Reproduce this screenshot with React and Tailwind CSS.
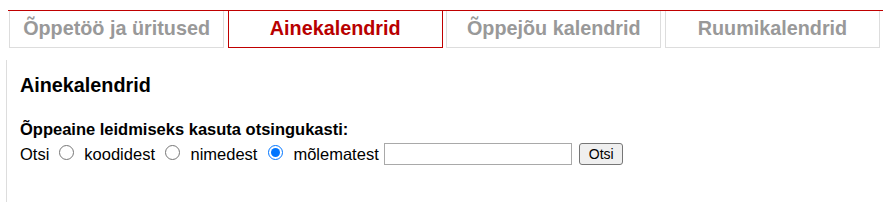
import { useState } from 'react'

const tabs = [
  { label: 'Õppetöö ja üritused', active: false },
  { label: 'Ainekalendrid', active: true },
  { label: 'Õppejõu kalendrid', active: false },
  { label: 'Ruumikalendrid', active: false },
]

export default function App() {
  const [mode, setMode] = useState('both')
  const [query, setQuery] = useState('')

  return (
    <div className="w-[892px] h-[202px] overflow-hidden bg-white flex flex-col font-['Liberation_Sans',Arial,sans-serif] text-black">
      {/* Tabs */}
      <div className="mt-[10px] ml-[8px] w-[875px] border-t border-[#c00000]">
        <div className="ml-[1px] w-[871px] grid grid-cols-4 gap-[3.5px]">
          {tabs.map((t) => (
            <div
              key={t.label}
              className={`h-[37px] flex items-center justify-center border-x border-b text-[19.8px] font-bold ${
                t.active ? 'border-[#c00000] text-[#b80000]' : 'border-[#dddddd] text-[#999999]'
              }`}
            >
              {t.label}
            </div>
          ))}
        </div>
      </div>

      {/* Content */}
      <div className="mt-[12px] ml-[6px] flex-1 border-l border-[#dddddd] pl-[13px]">
        <h2 className="mt-[14px] text-[19.8px] leading-[22px] font-bold">Ainekalendrid</h2>

        <div className="mt-[24px] text-[16.5px] leading-[18.4px] font-bold">
          Õppeaine leidmiseks kasuta otsingukasti:
        </div>

        <div className="mt-[4.5px] flex items-center text-[16.5px] leading-[18.4px]">
          <span>Otsi</span>
          <input
            type="radio"
            name="mode"
            checked={mode === 'code'}
            onChange={() => setMode('code')}
            className="ml-[10px] w-[15px] h-[15px] -mt-[3px]"
          />
          <span className="ml-[10px]">koodidest</span>
          <input
            type="radio"
            name="mode"
            checked={mode === 'name'}
            onChange={() => setMode('name')}
            className="ml-[10.5px] w-[15px] h-[15px] -mt-[3px]"
          />
          <span className="ml-[10px]">nimedest</span>
          <input
            type="radio"
            name="mode"
            checked={mode === 'both'}
            onChange={() => setMode('both')}
            className="ml-[11px] w-[15px] h-[15px] -mt-[3px]"
          />
          <span className="ml-[10px]">mõlematest</span>
          <input
            type="text"
            value={query}
            onChange={(e) => setQuery(e.target.value)}
            className="ml-[5.5px] w-[188px] h-[22px] border border-[#a9a9a9] bg-white px-[2px] text-[14.5px] outline-none"
          />
          <button className="ml-[7px] w-[44px] h-[22px] border border-[#767676] rounded-[3px] bg-[#efefef] text-[14px] leading-none text-black">
            Otsi
          </button>
        </div>
      </div>
    </div>
  )
}
